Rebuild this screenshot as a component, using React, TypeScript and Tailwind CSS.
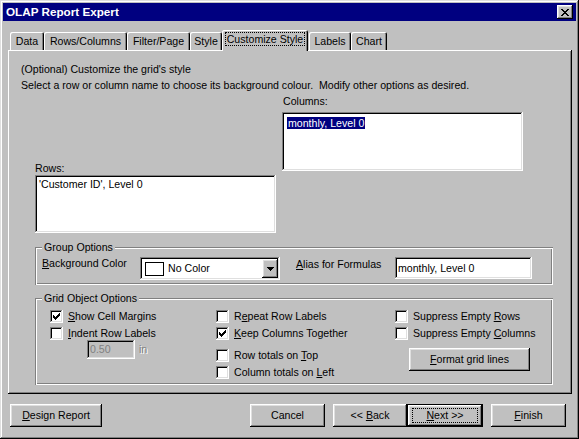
import React from "react";

const RAISED =
  "shadow-[inset_-1px_-1px_0_#000,inset_1px_1px_0_#fff,inset_-2px_-2px_0_#808080,inset_2px_2px_0_#dfdfdf]";
const SUNKEN =
  "shadow-[inset_-1px_-1px_0_#fff,inset_1px_1px_0_#808080,inset_-2px_-2px_0_#dfdfdf,inset_2px_2px_0_#000]";
const ETCHED =
  "shadow-[inset_1px_1px_0_#808080,inset_-1px_-1px_0_#fff,inset_2px_2px_0_#fff,inset_-2px_-2px_0_#808080]";

function U({ children }: { children: React.ReactNode }) {
  return <span className="underline decoration-1 underline-offset-[1px]">{children}</span>;
}

function Pixels({ w, h, rows }: { w: number; h: number; rows: [number, number, number][] }) {
  return (
    <svg width={w} height={h} shapeRendering="crispEdges" className="block">
      {rows.map(([x, y, l], i) => (
        <rect key={i} x={x} y={y} width={l} height={1} fill="#000" />
      ))}
    </svg>
  );
}

const CHECK: [number, number, number][] = [
  [9, 3, 1],
  [8, 4, 2],
  [3, 5, 1],
  [7, 5, 3],
  [3, 6, 2],
  [6, 6, 3],
  [3, 7, 5],
  [4, 8, 3],
  [5, 9, 1],
];

const CLOSE: [number, number, number][] = [
  [0, 0, 2], [6, 0, 2],
  [1, 1, 2], [5, 1, 2],
  [2, 2, 4],
  [3, 3, 2],
  [2, 4, 4],
  [1, 5, 2], [5, 5, 2],
  [0, 6, 2], [6, 6, 2],
];

const ARROW: [number, number, number][] = [
  [0, 0, 7],
  [1, 1, 5],
  [2, 2, 3],
  [3, 3, 1],
];

function Check({ checked, children, className = "" }: { checked?: boolean; children: React.ReactNode; className?: string }) {
  return (
    <div className={"flex items-center h-[13px] " + className}>
      <div className={"w-[13px] h-[13px] bg-white shrink-0 " + SUNKEN}>
        {checked ? <Pixels w={13} h={13} rows={CHECK} /> : null}
      </div>
      <span className="ml-[5px] leading-[13px] whitespace-nowrap">{children}</span>
    </div>
  );
}

function Tab({ w, children }: { w: number; children: React.ReactNode }) {
  return (
    <div
      style={{ width: w }}
      className="h-[18px] flex items-center justify-center rounded-t-[2px] shadow-[inset_1px_1px_0_#fff,inset_-1px_0_0_#000,inset_-2px_0_0_#808080] leading-[13px] whitespace-nowrap"
    >
      <span>{children}</span>
    </div>
  );
}

function Btn({ w, children, className = "" }: { w: number; children: React.ReactNode; className?: string }) {
  return (
    <div
      style={{ width: w }}
      className={"h-[23px] flex items-center justify-center leading-[13px] whitespace-nowrap " + RAISED + " " + className}
    >
      <span className="whitespace-pre">{children}</span>
    </div>
  );
}

export default function App() {
  return (
    <div className="w-[579px] h-[439px] bg-[#c0c0c0] p-[3px] flex flex-col text-[10.6px] text-black font-['Liberation_Sans',Arial,sans-serif] shadow-[inset_-1px_-1px_0_#000,inset_1px_1px_0_#dfdfdf,inset_-2px_-2px_0_#808080,inset_2px_2px_0_#fff] overflow-hidden">
      {/* Title bar */}
      <div className="h-[18px] bg-[#000080] flex items-center justify-between shrink-0">
        <span className="ml-[3px] text-white font-bold text-[11.7px] leading-[14px] whitespace-nowrap">
          OLAP Report Expert
        </span>
        <div className={"w-[16px] h-[14px] mr-[3px] bg-[#c0c0c0] flex items-center justify-center " + RAISED}>
          <Pixels w={8} h={7} rows={CLOSE} />
        </div>
      </div>

      {/* Tabs */}
      <div className="h-[29px] pl-[7px] flex items-end shrink-0">
        <Tab w={34}>Data</Tab>
        <Tab w={83}>Rows/Columns</Tab>
        <Tab w={63}>Filter/Page</Tab>
        <Tab w={32}>Style</Tab>
        <div className="relative z-10 w-[86px] h-[21px] mb-[-1px] bg-[#c0c0c0] rounded-t-[2px] flex justify-center items-start pt-[2px] shadow-[inset_1px_1px_0_#fff,inset_-1px_0_0_#000,inset_-2px_0_0_#808080]">
          <span className="border border-dotted border-black px-[1px] leading-[12px] whitespace-nowrap">
            Customize Style
          </span>
        </div>
        <div className="w-[1px]" />
        <Tab w={42}>Labels</Tab>
        <Tab w={36}>Chart</Tab>
      </div>

      {/* Panel */}
      <div className="ml-[5px] w-[564px] h-[344px] shrink-0 flex flex-col shadow-[inset_-1px_-1px_0_#000,inset_1px_1px_0_#fff,inset_-2px_-2px_0_#808080]">
        <div className="mt-[13px] ml-[13px]">
          <div className="h-[13px] leading-[13px] whitespace-pre">(Optional) Customize the grid's style</div>
          <div className="h-[13px] mt-[3px] leading-[13px] whitespace-pre">
            Select a row or column name to choose its background colour.  Modify other options as desired.
          </div>
        </div>

        <div className="flex items-start">
          <div className="ml-[27px] mt-[70px]">
            <div className="h-[13px] leading-[13px]">Rows:</div>
            <div className={"w-[241px] h-[58px] bg-white pt-[3px] pl-[4px] " + SUNKEN}>
              <div className="leading-[13px] whitespace-nowrap">'Customer ID', Level 0</div>
            </div>
          </div>
          <div className="ml-[6px] mt-[3px]">
            <div className="h-[13px] leading-[13px] ml-[1px]">Columns:</div>
            <div className={"mt-[4px] w-[241px] h-[59px] bg-white pt-[4px] pl-[5px] " + SUNKEN}>
              <span className="inline-block bg-[#000080] text-white leading-[12px] px-[1px] whitespace-nowrap">
                monthly, Level 0
              </span>
            </div>
          </div>
        </div>

        {/* Group Options */}
        <div className={"relative mt-[14px] ml-[27px] w-[518px] h-[38px] flex items-start pl-[7px] shrink-0 " + ETCHED}>
          <span className="absolute top-[-6px] left-[7px] px-[2px] bg-[#c0c0c0] leading-[13px] whitespace-nowrap">
            Group Options
          </span>
          <div className="w-[98px] mt-[10px] leading-[13px] whitespace-nowrap">
            <U>B</U>ackground Color
          </div>
          <div className={"mt-[10px] w-[140px] h-[23px] bg-white flex items-stretch pl-[5px] pr-[2px] py-[2px] " + SUNKEN}>
            <div className="self-center w-[19px] h-[14px] border border-black bg-white shrink-0" />
            <span className="self-center ml-[4px] flex-1 leading-[13px] whitespace-nowrap">No Color</span>
            <div className={"w-[16px] bg-[#c0c0c0] flex items-center justify-center " + RAISED}>
              <Pixels w={7} h={4} rows={ARROW} />
            </div>
          </div>
          <div className="ml-[16px] w-[99px] mt-[11px] leading-[13px] whitespace-nowrap">
            <U>A</U>lias for Formulas
          </div>
          <div className={"mt-[10px] w-[137px] h-[22px] bg-white flex items-center pl-[3px] " + SUNKEN}>
            <span className="leading-[13px] whitespace-nowrap">monthly, Level 0</span>
          </div>
        </div>

        {/* Grid Object Options */}
        <div className={"relative mt-[13px] ml-[27px] w-[518px] h-[87px] flex items-start pl-[15px] pt-[12px] shrink-0 " + ETCHED}>
          <span className="absolute top-[-6px] left-[7px] px-[2px] bg-[#c0c0c0] leading-[13px] whitespace-nowrap">
            Grid Object Options
          </span>
          <div className="w-[166px] flex flex-col">
            <Check checked>
              <U>S</U>how Cell Margins
            </Check>
            <Check className="mt-[4px]">
              <U>I</U>ndent Row Labels
            </Check>
            <div className="flex items-center ml-[37px]">
              <div className={"w-[48px] h-[19px] bg-[#c0c0c0] flex items-center pl-[3px] text-[#808080] " + SUNKEN}>
                <span className="leading-[13px]">0.50</span>
              </div>
              <span className="ml-[4px] leading-[13px] text-[#808080] [text-shadow:1px_1px_0_#fff]">in</span>
            </div>
          </div>
          <div className="w-[179px] flex flex-col">
            <Check>
              R<U>e</U>peat Row Labels
            </Check>
            <Check checked className="mt-[4px]">
              <U>K</U>eep Columns Together
            </Check>
            <Check className="mt-[9px]">
              Row totals on <U>T</U>op
            </Check>
            <Check className="mt-[4px]">
              Column totals on <U>L</U>eft
            </Check>
          </div>
          <div className="flex flex-col">
            <Check>
              Suppress Empty <U>R</U>ows
            </Check>
            <Check className="mt-[4px]">
              Suppress Empty <U>C</U>olumns
            </Check>
            <Btn w={121} className="mt-[8px] ml-[14px]">
              <U>F</U>ormat grid lines
            </Btn>
          </div>
        </div>
      </div>

      {/* Bottom buttons */}
      <div className="mt-[10px] flex items-start shrink-0">
        <Btn w={92} className="ml-[7px]">
          <U>D</U>esign Report
        </Btn>
        <Btn w={75} className="ml-[148px]">
          Cancel
        </Btn>
        <Btn w={74} className="ml-[8px]">
          {"<< "}
          <U>B</U>ack
        </Btn>
        <div className="w-[76px] h-[23px] border border-black flex">
          <div className={"flex-1 flex items-center justify-center " + RAISED}>
            <span className="border border-dotted border-black w-[66px] h-[15px] flex items-center justify-center leading-[13px]">
              <span className="whitespace-pre">
                <U>N</U>ext &gt;&gt;
              </span>
            </span>
          </div>
        </div>
        <Btn w={75} className="ml-[8px]">
          <U>F</U>inish
        </Btn>
      </div>
    </div>
  );
}
